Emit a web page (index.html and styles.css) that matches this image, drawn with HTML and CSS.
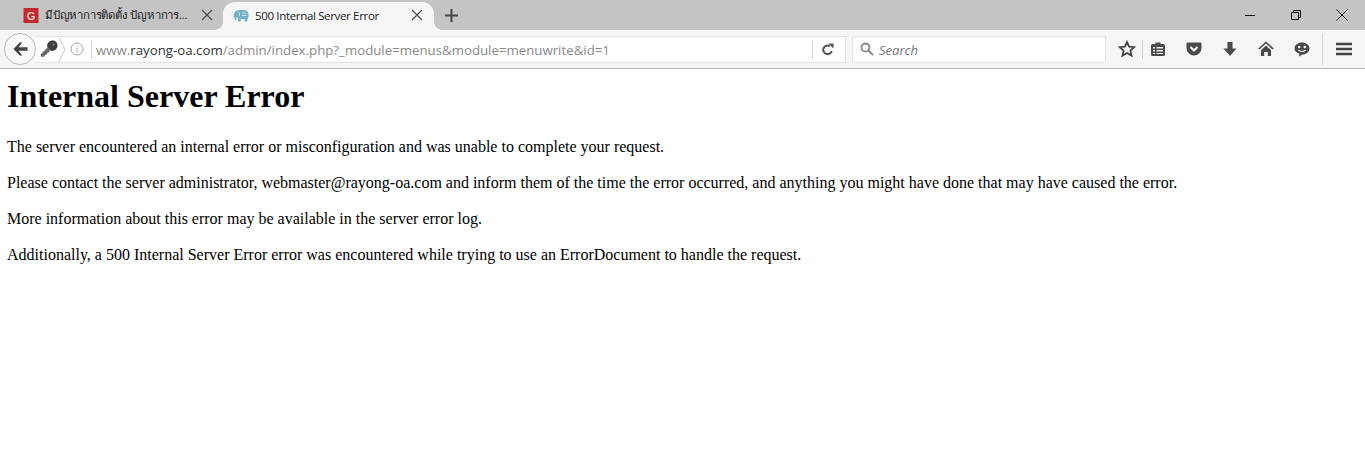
FILE: index.html
```html
<!DOCTYPE html>
<html lang="en">
<head>
<meta charset="utf-8">
<title>500 Internal Server Error</title>
<link rel="stylesheet" href="styles.css">
</head>
<body>
<header class="chrome">
  <div class="tabbar">
    <div class="tab">
      <svg class="favicon" viewBox="0 0 16 16"><rect width="16" height="16" fill="#c3282f"/><text x="8" y="12.5" class="fav-g">G</text></svg>
      <span class="tab-title tab-title-thai">มีปัญหาการติดตั้ง ปัญหาการ...</span>
      <svg class="tab-x" viewBox="0 0 12 12"><path d="M1 1l10 10M11 1L1 11"/></svg>
    </div>
    <div class="tab tab-active">
      <svg class="favicon favicon-php" viewBox="0 0 16 13"><path fill="#74afc9" d="M1.500 9.500C.5 8 .3 5.500 1.500 3.500 2.500 1.500 4.500.7 6.500 1H11c2.500 0 4.500 2 4.500 4.500 0 2-.3 3.500-1 4.500l-.3 2.500h-2.500L11.300 10H8l-.4 2.500H5.200L4.800 9.500 3.700 8 3 9.500 3.500 11 2.200 11z"/><path fill="none" stroke="#d6e8f0" stroke-width=".9" d="M4.700 2.200c1.600.9 2.200 3 1.500 5M9 4h4M9 6.500h4.500"/></svg>
      <span class="tab-title">500 Internal Server Error</span>
      <svg class="tab-x" viewBox="0 0 12 12"><path d="M1 1l10 10M11 1L1 11"/></svg>
    </div>
    <svg class="newtab" viewBox="0 0 13 13"><path d="M6.500 0v13M0 6.500h13"/></svg>
    <div class="winctl">
      <svg class="win-btn" viewBox="0 0 12 12"><path d="M1 6.500h10"/></svg>
      <svg class="win-btn" viewBox="0 0 12 12"><path d="M1.500 3.500h7v7h-7zM3.500 3.500v-2h7v7h-2"/></svg>
      <svg class="win-btn" viewBox="0 0 12 12"><path d="M.5.500l11 11M11.500.500l-11 11"/></svg>
    </div>
  </div>
  <div class="toolbar">
    <button class="back" aria-label="Back"><svg viewBox="0 0 16 14"><path d="M7.200 0L.5 7l6.700 7h2.600L6 8.800h9.500V5.200H6L9.800 0z"/></svg></button>
    <div class="urlbar">
      <svg class="key" viewBox="0 0 18 18"><path fill="#6a6a6a" d="M.5 14.500L8 7l3 3-2 1.500-.5 1.500-1.500.2-.3 1.600-1.700.2-.5 1.500-3 .5z"/><path fill="#3f3f3f" d="M7 6.500C7 3 9.500.5 12.500.5 15.500.5 17.500 2.500 17.500 5.500c0 3-2.500 5.500-6 5.500z"/><circle cx="13.500" cy="4.500" r="1.100" fill="#8a8a8a"/></svg>
      <svg class="chev" viewBox="0 0 8 24"><path d="M1 0l6 12-6 12"/></svg>
      <svg class="info" viewBox="0 0 14 14"><circle cx="7" cy="7" r="6"/><path d="M7 6v4.500M7 3.500v1.300"/></svg>
      <span class="vsep"></span>
      <span class="url"><span class="host"><span class="www">www.</span>rayong-oa.com</span>/admin/index.php?_module=menus&amp;module=menuwrite&amp;id=1</span>
      <span class="vsep"></span>
      <svg class="reload" viewBox="0 0 14 14"><path d="M11.500 8.500A4.600 4.600 0 1 1 9.500 3.500"/><path class="fill" d="M8 .5h5.500V6z"/></svg>
    </div>
    <div class="searchbar">
      <svg class="mag" viewBox="0 0 14 14"><circle cx="5.500" cy="5.500" r="4"/><path d="M8.500 8.500l4.500 4.500"/></svg>
      <span class="search-text">Search</span>
    </div>
    <div class="tools">
      <svg class="tool star" viewBox="0 0 18 18"><path d="M9 2l2.100 4.700 5.100.5-3.800 3.400 1.100 5L9 13l-4.500 2.600 1.100-5-3.800-3.400 5.100-.5z"/></svg>
      <span class="tool-sep"></span>
      <svg class="tool" viewBox="0 0 16 16"><path fill="#4a4a4a" fill-rule="evenodd" d="M2.500 3H5.500V1.500h5V3h3A1.500 1.500 0 0 1 15 4.500v9a1.500 1.500 0 0 1-1.500 1.500h-11A1.500 1.500 0 0 1 1 13.500v-9A1.500 1.500 0 0 1 2.500 3zM3 6v1.500h2V6zm3.500 0v1.500H13V6zM3 9v1.500h2V9zm3.500 0v1.500H13V9zM3 12v1h2v-1zm3.500 0v1H13v-1z"/></svg>
      <svg class="tool" viewBox="0 0 16 16"><path fill="#4a4a4a" d="M1.800 1.500h12.400A1.300 1.300 0 0 1 15.500 2.800V7A7.500 7.500 0 0 1 .5 7V2.800A1.300 1.300 0 0 1 1.800 1.500z"/><path d="M4.500 6L8 9.500 11.500 6" fill="none" stroke="#f5f5f5" stroke-width="2.200"/></svg>
      <svg class="tool" viewBox="0 0 16 16"><path fill="#4a4a4a" d="M5.500 1h5v6.500h4L8 15 1.500 7.500h4z"/></svg>
      <svg class="tool" viewBox="0 0 16 16"><path fill="#4a4a4a" d="M8 4.500l5 4.700V15H9.800v-4H6.200v4H3V9.200z"/><path fill="none" stroke="#4a4a4a" stroke-width="1.600" d="M.8 8L8 1.500 15.200 8"/></svg>
      <svg class="tool" viewBox="0 0 16 16"><path fill="#4a4a4a" d="M8 1.500c4 0 7.500 2.500 7.500 6s-3.500 6-7 6l-3.500 2 .5-2.800C2.500 11.800.5 10 .5 7.500c0-3.500 3.500-6 7.500-6z"/><circle cx="5.200" cy="6" r="1.300" fill="#f5f5f5"/><circle cx="10.800" cy="6" r="1.300" fill="#f5f5f5"/><path d="M4.500 9c2 1.800 5 1.800 7 0" fill="none" stroke="#f5f5f5" stroke-width="1.300"/></svg>
      <span class="tool-sep tool-sep-tall"></span>
      <svg class="tool menu" viewBox="0 0 16 14"><path d="M0 2h16M0 7h16M0 12h16"/></svg>
    </div>
  </div>
</header>
<main class="page">
  <h1>Internal Server Error</h1>
  <p>The server encountered an internal error or misconfiguration and was unable to complete your request.</p>
  <p>Please contact the server administrator, webmaster@rayong-oa.com and inform them of the time the error occurred, and anything you might have done that may have caused the error.</p>
  <p>More information about this error may be available in the server error log.</p>
  <p>Additionally, a 500 Internal Server Error error was encountered while trying to use an ErrorDocument to handle the request.</p>
</main>
</body>
</html>
```
FILE: styles.css
```css
* { box-sizing: border-box; }
html, body { margin: 0; padding: 0; background: #fff; overflow: hidden; }
svg { display: block; flex: none; }

.chrome { font-family: "Open Sans", "Noto Sans", sans-serif; }

.tabbar {
  height: 30px;
  background: #c4c4c4;
  display: flex;
  align-items: center;
  padding-left: 11px;
}
.tab {
  width: 212px;
  height: 30px;
  display: flex;
  align-items: center;
  padding: 0 10px 0 12px;
  color: #222;
  font-size: 11.500px;
  letter-spacing: -0.34px;
}
.tab-active {
  position: relative;
  width: 211px;
  margin-top: 2px;
  height: 28px;
  padding: 0 11px 2px 10px;
  background: #f5f5f5;
  border-radius: 12px 12px 0 0;
  color: #1a1a1a;
}
.tab-active::before,
.tab-active::after {
  content: "";
  position: absolute;
  bottom: 0;
  width: 8px;
  height: 8px;
}
.tab-active::before {
  left: -8px;
  background: radial-gradient(circle at 0 0, #c4c4c4 7.500px, #f5f5f5 8px);
}
.tab-active::after {
  right: -8px;
  background: radial-gradient(circle at 100% 0, #c4c4c4 7.500px, #f5f5f5 8px);
}
.favicon { width: 16px; height: 15px; margin-right: 6px; }
.favicon-php { height: 13px; }
.fav-g { font: 700 12px "Liberation Sans", sans-serif; fill: #f4c9c9; text-anchor: middle; }
.tab-title { flex: 1; white-space: nowrap; overflow: hidden; }
.tab-title-thai { letter-spacing: -0.2px; font-size: 11.400px; }
.tab-x { width: 12px; height: 12px; fill: none; stroke: #4c4c4c; stroke-width: 1.2; }
.newtab { width: 13px; height: 13px; margin-left: 11px; fill: none; stroke: #444; stroke-width: 2; }
.winctl {
  margin-left: auto;
  display: flex;
  gap: 34px;
  padding-right: 17px;
}
.win-btn { width: 12px; height: 12px; fill: none; stroke: #111; stroke-width: 1; }

.toolbar {
  height: 39px;
  background: #f5f5f5;
  border-bottom: 1px solid #b5b5b5;
  display: flex;
  align-items: center;
  padding-left: 4px;
}
.back {
  width: 32px;
  height: 32px;
  padding: 0;
  border: 1px solid #b9b9b9;
  border-radius: 50%;
  background: #fafafa;
  display: flex;
  align-items: center;
  justify-content: center;
  position: relative;
  z-index: 1;
}
.back svg { width: 15px; height: 14px; fill: #444; }

.urlbar {
  width: 811px;
  height: 27px;
  margin-left: -1px;
  background: #fff;
  border: 1px solid #e2e2e2;
  border-left: none;
  display: flex;
  align-items: center;
  padding-left: 5px;
}
.key { width: 18px; height: 18px; }
.chev { width: 8px; height: 25px; fill: none; stroke: #c8c8c8; stroke-width: 1; }
.info { width: 14px; height: 14px; margin-left: 4px; fill: none; stroke: #a5a5a5; stroke-width: 1; }
.vsep { width: 1px; height: 19px; background: #d4d4d4; flex: none; }
.info + .vsep { margin-left: 7px; }
.url {
  flex: 1;
  margin-left: 4px;
  padding-top: 1px;
  font-size: 13.250px;
  color: #8a8a8a;
  white-space: nowrap;
  overflow: hidden;
}
.host { color: #333; }
.www { color: #8a8a8a; }
.reload { width: 13px; height: 13px; margin: 0 11px 0 8px; fill: none; stroke: #555; stroke-width: 2.200; }
.reload .fill { fill: #555; stroke: none; }

.searchbar {
  width: 254px;
  height: 27px;
  margin-left: 6px;
  background: #fff;
  border: 1px solid #e2e2e2;
  display: flex;
  align-items: center;
  padding-left: 7px;
}
.mag { width: 14px; height: 14px; fill: none; stroke: #888; stroke-width: 1.800; }
.search-text { margin-left: 5px; padding-top: 1px; font-size: 13px; font-style: italic; color: #777; }

.tools {
  display: flex;
  align-items: center;
  margin-left: 12px;
}
.tool { width: 16px; height: 16px; margin-right: 20px; }
.star { width: 18px; height: 18px; margin-right: 6px; fill: none; stroke: #444; stroke-width: 1.800; }
.tool-sep { width: 1px; height: 19px; background: #d4d4d4; margin-right: 7px; }
.tool-sep-tall { height: 32px; margin: 0 13px 0 -8px; }
.menu { height: 14px; margin-right: 0; fill: none; stroke: #444; stroke-width: 2.600; }

.page {
  padding: 0 7px;
  font-family: "Liberation Serif", "Times New Roman", serif;
  font-size: 16px;
  color: #000;
}
h1 { font-size: 32px; font-weight: 700; margin: 9px 0 23px; line-height: 37px; }
p { margin: 0 0 18px; line-height: 18px; }
```
